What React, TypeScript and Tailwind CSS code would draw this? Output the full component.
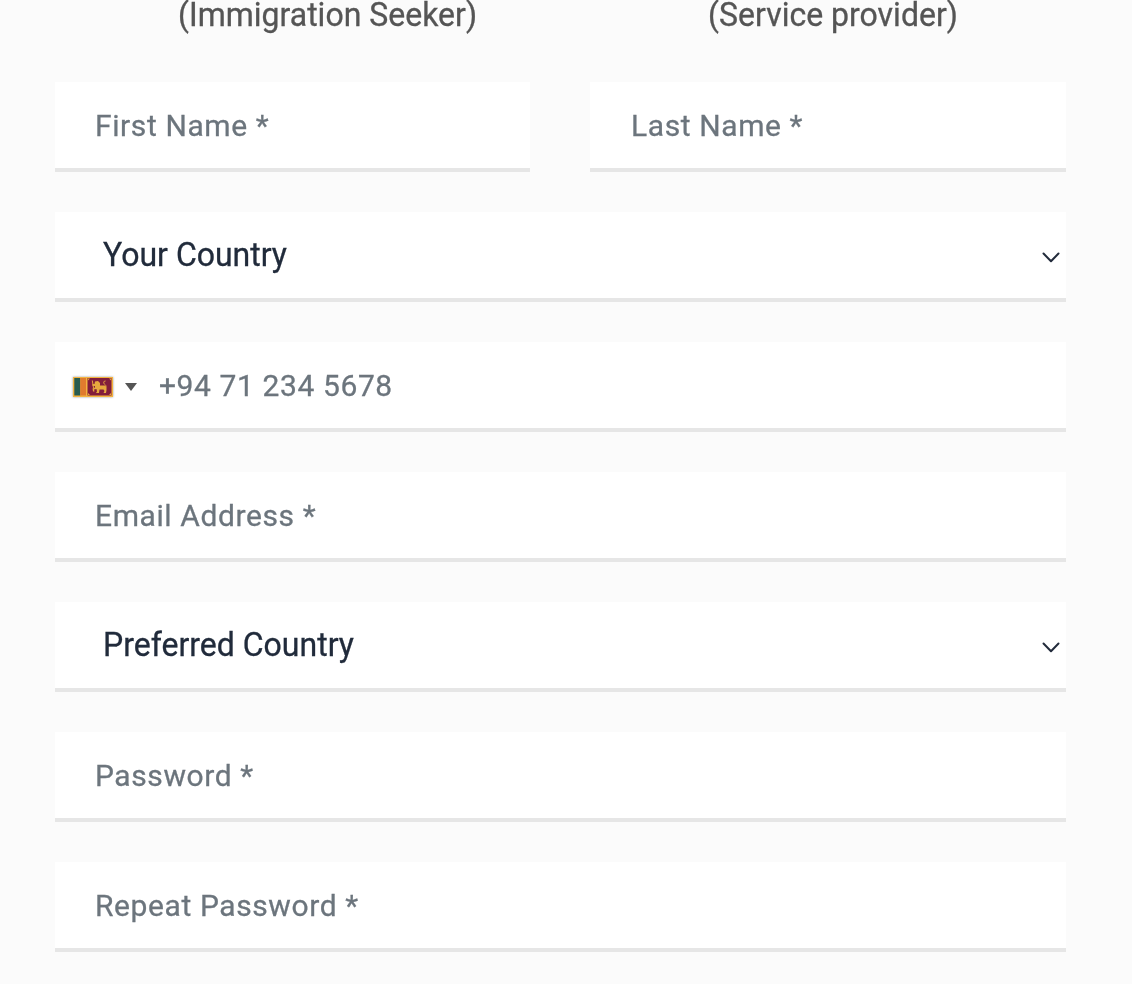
import type { ReactNode } from "react";

function Field({ children, className = "" }: { children: ReactNode; className?: string }) {
  return (
    <div className={`flex h-[90px] items-center border-b-4 border-[#e6e6e6] bg-white ${className}`}>
      {children}
    </div>
  );
}

function Placeholder({ text, inset = "pl-10" }: { text: string; inset?: string }) {
  return (
    <Field className={`pt-[2px] ${inset}`}>
      <span className="scale-y-[1.001] text-[30px] leading-9 tracking-[0.6px] text-[#6c757d] [-webkit-text-stroke:0.3px]">{text}</span>
    </Field>
  );
}

function Select({ label }: { label: string }) {
  return (
    <Field className="justify-between pr-[6px] pl-12">
      <span className="scale-y-[1.01] text-[32px] leading-9 text-[#212b3b] [-webkit-text-stroke:0.3px]">{label}</span>
      <svg className="mt-[5px] h-[11px] w-[18px]" viewBox="0 0 18 11" fill="none" stroke="#222b3b" strokeWidth="2" strokeLinecap="round" strokeLinejoin="round">
        <path d="M1.5 1.5 9 9.2 16.5 1.5" />
      </svg>
    </Field>
  );
}

function Flag() {
  return (
    <svg className="mt-0.5 h-[22px] w-[42px] drop-shadow-[0_0_1px_#999]" viewBox="0 0 42 22">
      <rect x="1" y="1" width="40" height="20" fill="#f3b340" />
      <rect x="2.3" y="2" width="6" height="17.5" fill="#285c50" />
      <rect x="8.3" y="2" width="5.7" height="17.5" fill="#e07b2e" />
      <rect x="15.5" y="2" width="24" height="17.5" fill="#821d3b" />
      <path d="M16 2.5h2l-2 2zM39 2.5h-2l2 2zM16 19v-2l2 2zM39 19v-2l-2 2z" fill="#e7a83e" />
      <path d="M23 5.5l3-.5 2 2v2.5h5l1.5 1.5v3l-.5 3h-2.5l1-2-1-1.5h-4l-.5 3.5h-3l1-1.5-.5-2.5-2.5.5.5 2h-1.5l-.5-3 2.5-1v-1.5h-2.5v-2h2z" fill="#e7a83e" />
      <path d="M20.3 4.5 21.5 12M33.5 11.5c1.5-2-1-3-1.5-4s-.5-2.5 1.5-2.5" fill="none" stroke="#e7a83e" strokeWidth="1" />
    </svg>
  );
}

export default function App() {
  return (
    <main className="h-[984px] overflow-hidden bg-[#fbfbfb] pr-[66px] pl-[55px] font-['Roboto',sans-serif]">
      <div className="flex h-[82px] text-[32px] leading-[30px] text-[#555] [-webkit-text-stroke:0.3px]">
        <div className="h-[30px] w-[545px] scale-y-[1.01] text-center">(Immigration Seeker)</div>
        <div className="h-[30px] w-[466px] scale-y-[1.01] text-center">(Service provider)</div>
      </div>
      <form className="flex flex-col gap-10">
        <div className="grid grid-cols-[475px_476px] gap-[60px]">
          <Placeholder text="First Name *" />
          <Placeholder text="Last Name *" inset="pl-[41px]" />
        </div>
        <Select label="Your Country" />
        <Field className="pt-[2px] pl-[17px]">
          <Flag />
          <svg className="mt-0.5 ml-[11px] h-2 w-3" viewBox="0 0 12 8"><path d="M0 0h12L6 8z" fill="#555" /></svg>
          <span className="ml-[22px] scale-y-[1.001] text-[30px] leading-9 tracking-[0.6px] text-[#6c757d] [-webkit-text-stroke:0.3px]">+94 71 234 5678</span>
        </Field>
        <Placeholder text="Email Address *" />
        <Select label="Preferred Country" />
        <Placeholder text="Password *" />
        <Placeholder text="Repeat Password *" />
      </form>
    </main>
  );
}
